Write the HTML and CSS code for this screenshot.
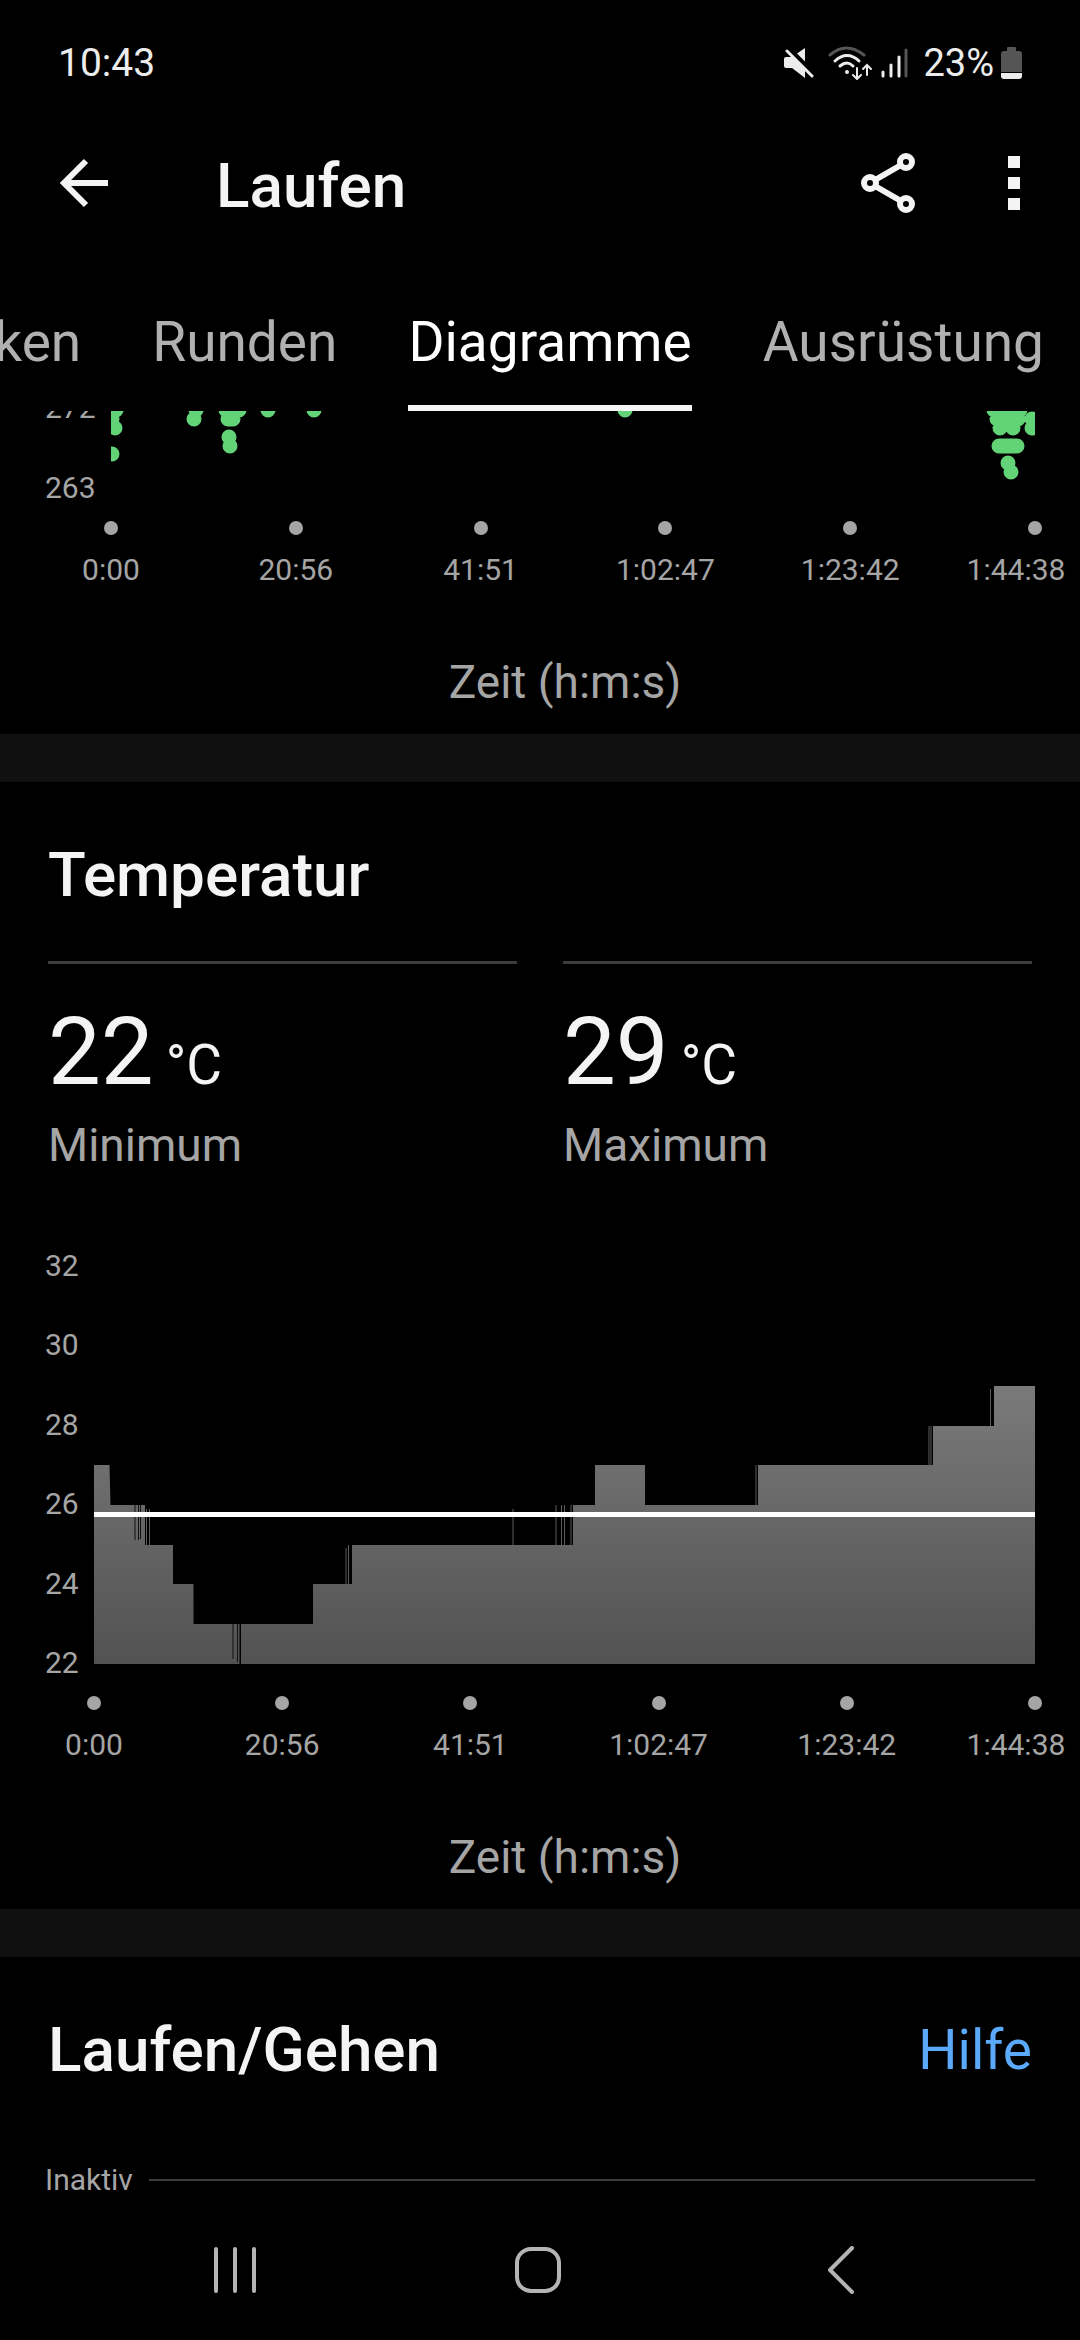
FILE: index.html
```html
<!DOCTYPE html>
<html lang="de">
<head>
    <meta charset="UTF-8">
    <meta name="viewport" content="width=device-width, initial-scale=1.0">
    <title>Laufen</title>
    <link rel="stylesheet" href="styles.css">
</head>
<body>
    <div class="status-bar">
        <span class="clock">10:43</span>
        <div class="status-icons">
            <svg class="icon-mute" width="30" height="34" viewBox="0 0 30 34">
                <path d="M2 11h6L21 2v30L8 22H2q-2 0-2-2v-7q0-2 2-2z" fill="#ececec"/>
                <path d="M3 1L30 28" stroke="#000" stroke-width="5"/>
                <path d="M3 5L28 30" stroke="#ececec" stroke-width="3" stroke-linecap="round"/>
            </svg>
            <svg class="icon-wifi" width="44" height="34" viewBox="0 0 44 34" fill="none" stroke="#ececec" stroke-width="3" stroke-linecap="round">
                <path d="M2 9q16-14 34 0" stroke="#555"/>
                <path d="M7 15q12-11 24 0M12 20q7-6 13 0"/>
                <circle cx="19" cy="26" r="2" fill="#ececec" stroke="none"/>
                <path d="M29 22v10M25 29l4 4 4-4M39 29V19M35 23l4-4 4 4" stroke-width="2"/>
            </svg>
            <svg class="icon-signal" width="28" height="34" viewBox="0 0 28 34" stroke="#ececec" stroke-width="3" stroke-linecap="round">
                <path d="M2 26v4M10 19v11M18 11v19"/>
                <path d="M25 4v26" stroke="#555"/>
            </svg>
            <span class="percent">23%</span>
            <svg class="icon-battery" width="21" height="34" viewBox="0 0 21 34">
                <path d="M6 2q0-1 1-1h7q1 0 1 1v3h3q3 0 3 3v18H0V8q0-3 3-3h3z" fill="#555"/>
                <path d="M0 27h21v3q0 3-3 3H3q-3 0-3-3z" fill="#ececec"/>
            </svg>
        </div>
    </div>

    <header class="app-bar">
        <button class="icon-button" aria-label="Zurück">
            <svg width="48" height="60" viewBox="0 0 48 60" fill="none" stroke="#f4f4f4" stroke-width="6">
                <path d="M48 30H5M26 8L4 30l22 22"/>
            </svg>
        </button>
        <h1 class="app-title">Laufen</h1>
        <button class="icon-button" aria-label="Teilen">
            <svg width="54" height="60" viewBox="0 0 54 60" fill="none" stroke="#f4f4f4" stroke-width="6">
                <circle cx="45" cy="9" r="6"/>
                <circle cx="9" cy="30" r="6"/>
                <circle cx="45" cy="51" r="6"/>
                <path d="M14 27l26-15M14 33l26 15"/>
            </svg>
        </button>
        <button class="icon-button" aria-label="Mehr">
            <svg width="12" height="60" viewBox="0 0 12 60" fill="#f4f4f4">
                <path d="M0 3h12v12H0zM0 24h12v12H0zM0 45h12v12H0z"/>
            </svg>
        </button>
    </header>

    <nav class="tabs">
        <a class="tab" href="#">Statistiken</a>
        <a class="tab" href="#">Runden</a>
        <a class="tab active" href="#">Diagramme</a>
        <a class="tab" href="#">Ausrüstung</a>
    </nav>

    <main class="content">
        <section class="card card-scrolled">
            <div class="chart chart-wide-labels">
                <div class="y-axis">
                    <span>272</span>
                    <span>263</span>
                </div>
                <svg class="plot plot-dots" viewBox="0 0 924 80" preserveAspectRatio="none">
                    <path d="M5 1h0M1 10h0M4 19h0M1 45h0
                             M85 1h0M83 10h0
                             M115 1h13M117 10h5M118 28h0M119 37h0
                             M157 1h0M203 1h0M514 1h0
                             M883 1h26M886 10h21M921 10h0M889 19h0M902 19h0M921 19h0
                             M888 37h18M897 54h0M900 63h0"/>
                </svg>
                <ol class="x-axis">
                    <li><span>0:00</span></li>
                    <li><span>20:56</span></li>
                    <li><span>41:51</span></li>
                    <li><span>1:02:47</span></li>
                    <li><span>1:23:42</span></li>
                    <li><span>1:44:38</span></li>
                </ol>
            </div>
            <p class="axis-title">Zeit (h:m:s)</p>
        </section>

        <section class="card">
            <h2 class="card-title">Temperatur</h2>
            <div class="stats">
                <div class="stat">
                    <div class="stat-value">22 <span class="unit">°C</span></div>
                    <div class="stat-label">Minimum</div>
                </div>
                <div class="stat">
                    <div class="stat-value">29 <span class="unit">°C</span></div>
                    <div class="stat-label">Maximum</div>
                </div>
            </div>
            <div class="chart">
                <div class="y-axis">
                    <span>32</span>
                    <span>30</span>
                    <span>28</span>
                    <span>26</span>
                    <span>24</span>
                    <span>22</span>
                </div>
                <svg class="plot plot-area" viewBox="0 0 941 397" preserveAspectRatio="none">
                    <defs>
                        <linearGradient id="fill" x1="0" y1="0" x2="0" y2="1">
                            <stop offset="0" stop-color="#7a7a7a"/>
                            <stop offset="1" stop-color="#525252"/>
                        </linearGradient>
                    </defs>
                    <path fill="url(#fill)" d="M0 397V198H15.500L16.500 238H51V278H79V317H99.500V357H145.500V397H147V357H219V317H258V278H479V238H501V198H551V238H664V198H839V159H900V119H941V397z"/>
                    <!-- short jumps between two degrees -->
                    <path class="jump-down" d="M41 238v35M44.500 238v35M46.500 238v34M139 357v35M143.500 357v38"/>
                    <path class="jump-up" d="M52.500 242v36M55.500 242v36M252 281v37M254.500 278v40M419 242v36M462 238v40M467.500 238v40M470.500 238v40M477 238v40M662 198v40M835 159v40M837 159v40M896.500 122v37"/>
                    <path class="mean" d="M0 247.500H941"/>
                </svg>
                <ol class="x-axis">
                    <li><span>0:00</span></li>
                    <li><span>20:56</span></li>
                    <li><span>41:51</span></li>
                    <li><span>1:02:47</span></li>
                    <li><span>1:23:42</span></li>
                    <li><span>1:44:38</span></li>
                </ol>
            </div>
            <p class="axis-title">Zeit (h:m:s)</p>
        </section>

        <section class="card">
            <div class="card-head">
                <h2 class="card-title">Laufen/Gehen</h2>
                <a class="help" href="#">Hilfe</a>
            </div>
            <div class="lane">
                <span>Inaktiv</span>
                <hr>
            </div>
        </section>
    </main>

    <div class="nav-bar">
        <button class="icon-button" aria-label="Letzte Apps">
            <svg width="48" height="48" viewBox="0 0 48 48" stroke="#b4b4b4" stroke-width="4" stroke-linecap="round">
                <path d="M5 3v42M24 3v42M43 3v42"/>
            </svg>
        </button>
        <button class="icon-button" aria-label="Startseite">
            <svg width="48" height="48" viewBox="0 0 48 48" fill="none" stroke="#b4b4b4" stroke-width="4">
                <rect x="3" y="3" width="42" height="42" rx="14"/>
            </svg>
        </button>
        <button class="icon-button" aria-label="Zurück">
            <svg width="48" height="48" viewBox="0 0 48 48" fill="none" stroke="#b4b4b4" stroke-width="4" stroke-linecap="round" stroke-linejoin="round">
                <path d="M35 2L13 24l22 22"/>
            </svg>
        </button>
    </div>
</body>
</html>
```
FILE: styles.css
```css
* {
    box-sizing: border-box;
}
body {
    margin: 0;
    min-height: 100vh;
    display: flex;
    flex-direction: column;
    background: #000;
    color: #f4f4f4;
    font-family: Roboto, "Liberation Sans", sans-serif;
    overflow-x: hidden;
}
h1, h2, p, ol {
    margin: 0;
    padding: 0;
}
a {
    text-decoration: none;
}
svg {
    display: block;
}
.icon-button {
    padding: 0;
    border: 0;
    background: none;
    cursor: pointer;
}

/* status bar */
.status-bar {
    height: 96px;
    padding: 30px 58px 0 58px;
    display: flex;
    align-items: center;
    justify-content: space-between;
    color: #ececec;
    font-size: 38px;
}
.clock {
    font-size: 39px;
}
.status-icons {
    display: flex;
    align-items: center;
}
.icon-wifi {
    margin-left: 14px;
}
.icon-signal {
    margin-left: 9px;
}
.percent {
    margin: 0 7px 0 14px;
}

/* app bar */
.app-bar {
    height: 174px;
    padding: 0 60px;
    display: flex;
    align-items: center;
}
.app-title {
    flex: 1;
    margin-left: 108px;
    padding-top: 4px;
    font-size: 62px;
    font-weight: 500;
}
.app-bar .icon-button:last-child {
    margin-left: 93px;
}

/* tabs */
.tabs {
    height: 141px;
    padding-right: 36px;
    display: flex;
    justify-content: flex-end;
    gap: 71px;
    overflow: hidden;
}
.tab {
    display: flex;
    align-items: center;
    padding-top: 9px;
    border-bottom: 6px solid transparent;
    color: #b0b0b0;
    font-size: 55px;
}
.tab.active {
    color: #fff;
    border-bottom-color: #f4f4f4;
}

/* cards */
.content {
    overflow: hidden;
}
.card {
    padding: 57px 48px 24px;
    border-bottom: 48px solid #101010;
}
.card:last-child {
    padding-bottom: 0;
    border-bottom: 0;
}
.card-scrolled {
    margin-top: -2px;
    padding-top: 0;
}
.card-head {
    display: flex;
    align-items: center;
    justify-content: space-between;
}
.card-title {
    font-size: 62px;
    font-weight: 500;
    line-height: 72px;
}
.help {
    color: #5aa9fa;
    font-size: 55px;
    line-height: 72px;
}

.stats {
    display: grid;
    grid-template-columns: 1fr 1fr;
    gap: 46px;
    margin: 50px 0 94px;
}
.stat {
    border-top: 3px solid #3c3c3c;
    padding-top: 32px;
}
.stat-value {
    font-size: 94px;
    line-height: 112px;
    display: flex;
    align-items: baseline;
    gap: 12px;
}
.unit {
    font-size: 55px;
    line-height: 56px;
}
.stat-label {
    margin-top: 9px;
    color: #a5a5a5;
    font-size: 46px;
    line-height: 56px;
}

/* charts */
.chart {
    display: grid;
    grid-template-columns: 49px 1fr;
    margin: 0 -3px;
    color: #a5a5a5;
    font-size: 30px;
}
.chart-wide-labels {
    grid-template-columns: 66px 1fr;
}
.y-axis {
    display: flex;
    flex-direction: column;
    justify-content: space-between;
    margin: -17px 0 -15px;
    line-height: 32px;
}
.plot {
    width: 100%;
}
.plot-dots {
    height: 80px;
    fill: none;
    stroke: #62d377;
    stroke-width: 15;
    stroke-linecap: round;
}
.plot-area {
    height: 397px;
}
.jump-down {
    stroke: #111;
}
.jump-up {
    stroke: #5c5c5c;
}
.mean {
    stroke: #fff;
    stroke-width: 5;
}
.x-axis {
    grid-column: 2;
    margin-top: 32px;
    display: flex;
    justify-content: space-between;
    list-style: none;
    line-height: 36px;
}
.x-axis li {
    width: 0;
    display: flex;
    flex-direction: column;
    align-items: center;
    gap: 17px;
    white-space: nowrap;
}
.x-axis li::before {
    content: "";
    flex: none;
    width: 14px;
    height: 14px;
    border-radius: 50%;
    background: #a5a5a5;
}
/* keeps the last label inside the screen */
.x-axis li:last-child span {
    margin-right: 38px;
}
.axis-title {
    margin: 66px -48px 0;
    padding-left: 50px;
    color: #a5a5a5;
    font-size: 46px;
    line-height: 56px;
    text-align: center;
}

.lane {
    display: flex;
    align-items: center;
    gap: 16px;
    margin: 76px -3px 0;
    color: #a5a5a5;
    font-size: 30px;
    line-height: 36px;
}
.lane hr {
    flex: 1;
    margin: 0;
    border: 0;
    border-top: 2px solid #3c3c3c;
}

/* system navigation */
.nav-bar {
    height: 136px;
    margin-top: auto;
    padding: 0 88px 4px 84px;
    display: grid;
    grid-template-columns: repeat(3, 1fr);
    align-items: center;
    justify-items: center;
}
```
